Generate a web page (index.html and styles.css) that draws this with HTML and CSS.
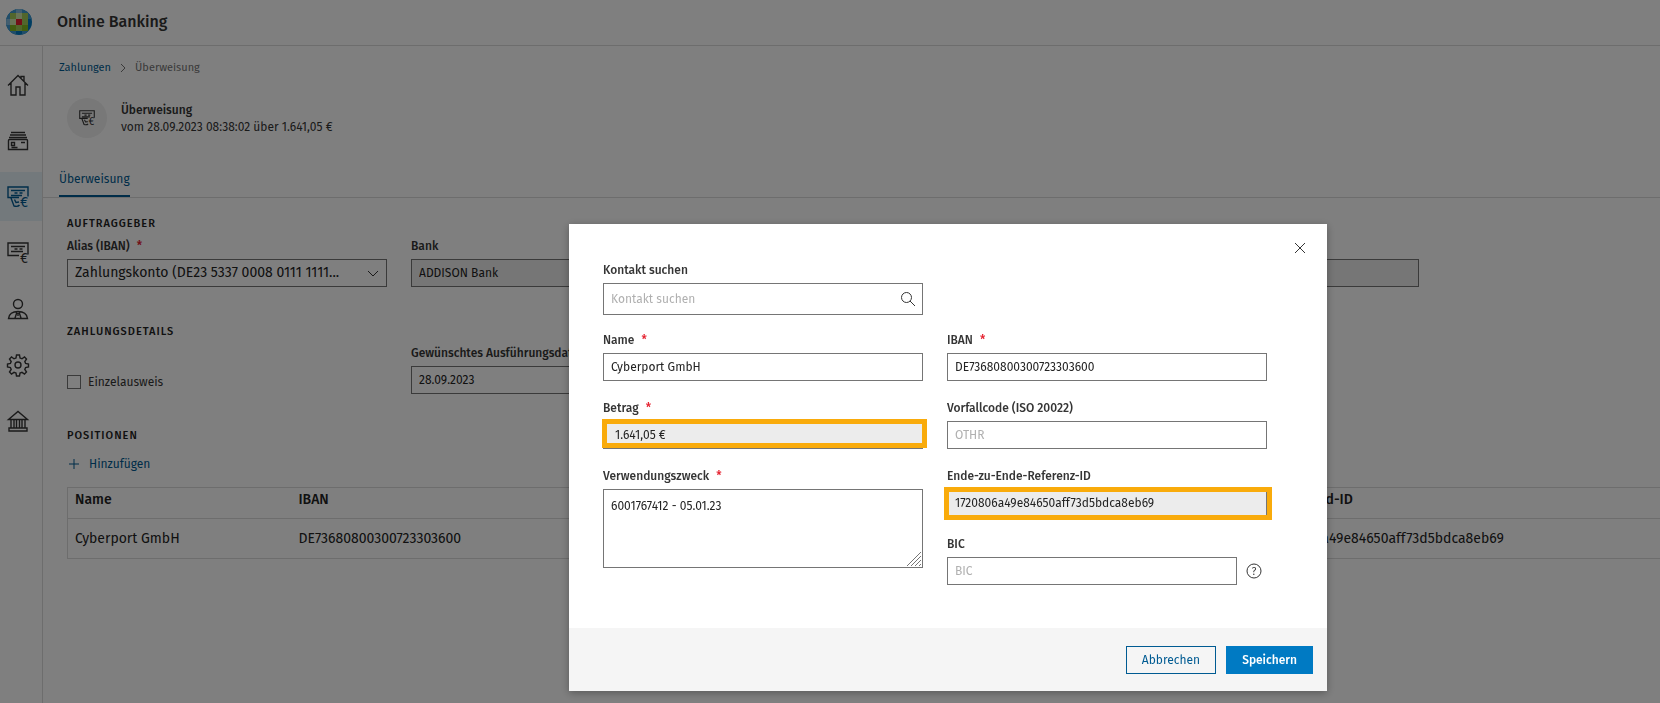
FILE: index.html
```html
<!DOCTYPE html>
<html lang="de">
<head>
    <meta charset="UTF-8">
    <meta name="viewport" content="width=device-width, initial-scale=1.0">
    <title>Online Banking</title>
    <link rel="stylesheet" href="styles.css">
</head>
<body>

    <header class="topbar">
        <svg class="logo" viewBox="0 0 26 26" aria-hidden="true">
            <clipPath id="globe"><circle cx="13" cy="13" r="13"/></clipPath>
            <g clip-path="url(#globe)">
                <rect width="26" height="26" fill="#007ac3"/>
                <path fill="#409bd2" d="M4 0h6v4H4zM16 0h6v4h-6zM4 22h6v4H4zM16 22h6v4h-6zM0 4h4v6H0zM0 16h4v6H0zM22 4h4v6h-4z"/>
                <path fill="#85bce0" d="M10 0h6v4h-6zM0 10h4v6H0z"/>
                <rect x="4" y="4" width="18" height="18" fill="#85bc20"/>
                <path fill="#a4cd58" d="M4 4h6v6H4zM16 4h6v6h-6zM16 10h6v6h-6zM10 16h6v6h-6z"/>
                <path fill="#d3e8af" d="M10 4h6v6h-6zM4 10h6v6H4z"/>
                <rect x="10" y="10" width="6" height="6" fill="#e5202e"/>
            </g>
        </svg>
        <span class="app-name">Online Banking</span>
    </header>

    <div class="shell">
        <nav class="sidebar">
            <a href="#" class="nav-item" aria-label="Start">
                <svg class="icon" viewBox="0 0 22 22"><path d="M1 11.5 11 1.500l10 10M4 9v12h5v-8h4v8h5V9M14 4V2.500h3V7"/></svg>
            </a>
            <a href="#" class="nav-item" aria-label="Konten">
                <svg class="icon" viewBox="0 0 22 22"><path d="M4 2.500h14M3 5h16M2 7.500h18M1.500 10.500q0-1 1-1h17q1 0 1 1v9h-19zM4.500 12.500h3v3h-3zM4.500 17.500h6M14 12.500h4"/></svg>
            </a>
            <a href="#" class="nav-item active" aria-label="Zahlungen">
                <svg class="icon" viewBox="0 0 22 22"><path d="M12 11.500H1V1h20v9.500M4 4.500h14M7.500 7h3M12.500 7h3M4 9.500h11M4 12l3 8q4 1 5.500-1M7.500 13.500l1.500 3 3-.5"/><text x="13" y="21" font-size="14">€</text></svg>
            </a>
            <a href="#" class="nav-item" aria-label="Lastschriften">
                <svg class="icon" viewBox="0 0 22 22"><path d="M12 13.500H1V1h20v11.500M4 4.500h14M7.500 7h3M12.500 7h3M4 9.500h12"/><text x="13" y="21" font-size="14">€</text></svg>
            </a>
            <a href="#" class="nav-item" aria-label="Kontakte">
                <svg class="icon" viewBox="0 0 22 22"><circle cx="11" cy="6" r="4.500"/><path d="M1.500 20.500h19q-1-7-9.500-7t-9.500 7zM10 14l-2 6M12 14l2 6M11 15v3"/></svg>
            </a>
            <a href="#" class="nav-item" aria-label="Einstellungen">
                <svg class="icon" viewBox="0 0 22 22"><circle cx="11" cy="11" r="3"/><path d="M9.500 1h3l.5 3 2 .800 2.500-1.800 2 2L17.800 7.500l.8 2 2.900.5v3l-2.900.5-.8 2 1.700 2.500-2 2-2.500-1.700-2 .8-.5 2.900h-3l-.5-2.900-2-.8-2.500 1.700-2-2 1.700-2.500-.8-2-2.900-.5v-3l2.900-.5.8-2-1.700-2.500 2-2L7 4.800 9 4z"/></svg>
            </a>
            <a href="#" class="nav-item" aria-label="Banken">
                <svg class="icon" viewBox="0 0 22 22"><path d="M1.500 9.500 11 1.500l9.500 8zM4 10v8M7 10v8M9.500 10v8M12.500 10v8M15 10v8M18 10v8M2 18h18v3H2z"/></svg>
            </a>
        </nav>

        <main class="content">
            <nav class="breadcrumb">
                <a href="#">Zahlungen</a>
                <svg class="crumb-arrow" viewBox="0 0 6 10"><path d="M1 1l4 4-4 4"/></svg>
                <span>Überweisung</span>
            </nav>

            <div class="page-head">
                <div class="head-icon">
                    <svg viewBox="0 0 22 22"><path d="M12 11.500H1V1h20v9.500M4 4.500h14M7.500 7h3M12.500 7h3M4 9.500h11M4 12l3 8q4 1 5.500-1M7.500 13.500l1.500 3 3-.5"/><text x="13" y="21" font-size="14">€</text></svg>
                </div>
                <div>
                    <h1>Überweisung</h1>
                    <p>vom 28.09.2023 08:38:02 über 1.641,05 €</p>
                </div>
            </div>

            <div class="tabs">
                <a href="#" class="tab">Überweisung</a>
            </div>

            <section class="block">
                <h2>Auftraggeber</h2>
                <div class="columns">
                    <div class="field">
                        <label for="alias">Alias (IBAN) <span class="required">*</span></label>
                        <div class="select-wrap">
                            <select id="alias">
                                <option>Zahlungskonto (DE23 5337 0008 0111 1111...</option>
                            </select>
                            <svg class="chevron" viewBox="0 0 12 8"><path d="M1 1l5 5 5-5"/></svg>
                        </div>
                    </div>
                    <div class="field">
                        <label for="bank">Bank</label>
                        <input type="text" id="bank" value="ADDISON Bank" readonly>
                    </div>
                    <div class="field last-column">
                        <input type="text" aria-label="BIC der Bank" readonly>
                    </div>
                </div>
            </section>

            <section class="block">
                <h2>Zahlungsdetails</h2>
                <div class="columns">
                    <div class="check">
                        <input type="checkbox" id="single">
                        <label for="single">Einzelausweis</label>
                    </div>
                    <div class="field">
                        <label for="date">Gewünschtes Ausführungsdatum</label>
                        <input type="text" id="date" value="28.09.2023">
                    </div>
                </div>
            </section>

            <section class="block">
                <h2>Positionen</h2>
                <button type="button" class="add">
                    <svg viewBox="0 0 10 10"><path d="M5 0v10M0 5h10"/></svg>
                    Hinzufügen
                </button>
                <table class="positions">
                    <thead>
                        <tr><th class="col-name">Name</th><th class="col-iban">IBAN</th><th>EndToEnd-ID</th></tr>
                    </thead>
                    <tbody>
                        <tr><td>Cyberport GmbH</td><td>DE73680800300723303600</td><td>1720806a49e84650aff73d5bdca8eb69</td></tr>
                    </tbody>
                </table>
            </section>
        </main>
    </div>

    <div class="overlay">
        <form class="modal" role="dialog" aria-label="Position bearbeiten">
            <button type="button" class="close" aria-label="Schließen">
                <svg viewBox="0 0 12 12"><path d="M1 1l10 10M11 1L1 11"/></svg>
            </button>

            <div class="modal-body">
                <div class="modal-column search-row">
                    <div class="field">
                        <label for="search">Kontakt suchen</label>
                        <div class="search-wrap">
                            <input type="text" id="search" placeholder="Kontakt suchen">
                            <svg class="search-icon" viewBox="0 0 16 16"><circle cx="6.500" cy="6.500" r="5"/><path d="M10 10l5 5"/></svg>
                        </div>
                    </div>
                </div>

                <div class="modal-column">
                    <div class="field">
                        <label for="name">Name <span class="required">*</span></label>
                        <input type="text" id="name" value="Cyberport GmbH">
                    </div>
                    <div class="field">
                        <label for="amount">Betrag <span class="required">*</span></label>
                        <div class="marked mark-amount">
                            <input type="text" id="amount" value="1.641,05 €" readonly>
                        </div>
                    </div>
                    <div class="field">
                        <label for="purpose">Verwendungszweck <span class="required">*</span></label>
                        <div class="textarea-wrap">
                            <textarea id="purpose">6001767412 - 05.01.23</textarea>
                            <svg class="grip" viewBox="0 0 15 15"><path d="M1 15L15 1M5 15L15 5M9 15l6-6M13 15l2-2"/></svg>
                        </div>
                    </div>
                </div>

                <div class="modal-column">
                    <div class="field">
                        <label for="iban">IBAN <span class="required">*</span></label>
                        <input type="text" id="iban" value="DE73680800300723303600">
                    </div>
                    <div class="field">
                        <label for="code">Vorfallcode (ISO 20022)</label>
                        <input type="text" id="code" placeholder="OTHR">
                    </div>
                    <div class="field">
                        <label for="reference">Ende-zu-Ende-Referenz-ID</label>
                        <div class="marked mark-reference">
                            <input type="text" id="reference" value="1720806a49e84650aff73d5bdca8eb69" readonly>
                        </div>
                    </div>
                    <div class="field">
                        <label for="bic">BIC</label>
                        <div class="bic-row">
                            <input type="text" id="bic" placeholder="BIC">
                            <svg class="help" viewBox="0 0 16 16"><circle cx="8" cy="8" r="7"/><text x="8" y="12" text-anchor="middle" font-size="10">?</text></svg>
                        </div>
                    </div>
                </div>
            </div>

            <div class="modal-footer">
                <button type="button" class="btn">Abbrechen</button>
                <button type="submit" class="btn btn-primary">Speichern</button>
            </div>
        </form>
    </div>

</body>
</html>
```
FILE: styles.css
```css
* {
    box-sizing: border-box;
}

body {
    margin: 0;
    min-height: 100vh;
    display: flex;
    flex-direction: column;
    overflow: hidden;
    font-family: "Fira Sans", Roboto, sans-serif;
    font-size: 12px;
    line-height: 16px;
    color: #353535;
    background: #fff;
}

h1, h2, p {
    margin: 0;
}

a {
    color: #005b92;
    text-decoration: none;
}

svg {
    display: block;
    overflow: visible;
    fill: none;
    stroke: currentColor;
}

svg text {
    fill: currentColor;
    stroke: none;
}

input, select, textarea, button {
    font: inherit;
}

/* header */
.topbar {
    display: flex;
    align-items: center;
    gap: 25px;
    height: 46px;
    padding: 0 6px 2px;
    border-bottom: 1px solid #dadada;
}

.logo {
    width: 26px;
    height: 26px;
    stroke: none;
}

.app-name {
    font-size: 16px;
    font-weight: 500;
}

/* sidebar */
.shell {
    display: flex;
    flex: 1;
}

.sidebar {
    display: flex;
    flex-direction: column;
    gap: 7px;
    flex: 0 0 43px;
    padding-top: 14px;
    border-right: 1px solid #dadada;
}

.nav-item {
    display: flex;
    align-items: center;
    height: 49px;
    padding-left: 7px;
    color: #353535;
}

.nav-item.active {
    background: #e6f2f9;
    color: #005b92;
}

.icon {
    width: 22px;
    height: 22px;
    stroke-width: 1.4;
}

/* page */
.content {
    flex: 1;
    min-width: 0;
}

.breadcrumb {
    display: flex;
    align-items: center;
    gap: 9px;
    padding: 14px 16px 0;
    font-size: 11px;
    color: #757575;
}

.crumb-arrow {
    width: 6px;
    height: 10px;
}

.page-head {
    display: flex;
    align-items: center;
    gap: 14px;
    padding: 22px 24px 0;
}

.page-head h1 {
    font-size: 12px;
    font-weight: 500;
    line-height: 17px;
}

.head-icon {
    display: flex;
    align-items: center;
    justify-content: center;
    width: 40px;
    height: 40px;
    border-radius: 50%;
    background: #f0f0f0;
}

.head-icon svg {
    width: 16px;
    height: 16px;
    stroke-width: 1.5;
}

.tabs {
    display: flex;
    margin-top: 33px;
    padding-left: 16px;
    border-bottom: 1px solid #dadada;
}

.tab {
    padding-bottom: 8px;
    border-bottom: 2px solid #005b92;
}

.block {
    padding-left: 24px;
}

.block h2 {
    font-size: 11px;
    font-weight: 500;
    letter-spacing: 1px;
    text-transform: uppercase;
    color: #232323;
}

.tabs + .block {
    margin-top: 18px;
}

.block + .block {
    margin-top: 37px;
}

.block:last-child {
    margin-top: 34px;
}

.columns {
    display: grid;
    grid-template-columns: repeat(4, minmax(0, 320px));
    align-items: end;
    gap: 24px;
    margin-top: 6px;
}

.last-column {
    grid-column: 4;
}

.block + .block .columns {
    margin-top: 5px;
}

/* fields */
.field label {
    display: block;
    margin-bottom: 5px;
    font-weight: 500;
}

.required {
    margin-left: 4px;
    color: #e5202e;
}

input[type="text"], select, textarea {
    display: block;
    width: 100%;
    height: 28px;
    margin: 0;
    padding: 0 7px;
    border: 1px solid #757575;
    border-radius: 0;
    background: #fff;
    color: #232323;
}

input::placeholder {
    color: #b0b0b0;
}

input[readonly] {
    background: #ececec;
}

.select-wrap, .search-wrap, .textarea-wrap, .marked {
    position: relative;
}

select {
    appearance: none;
    font-size: 14px;
}

.chevron {
    position: absolute;
    top: 11px;
    right: 8px;
    width: 12px;
    height: 8px;
}

.check {
    display: flex;
    align-items: center;
    gap: 7px;
    padding-bottom: 4px;
}

.check input {
    appearance: none;
    width: 14px;
    height: 14px;
    margin: 0;
    border: 1px solid #757575;
}

.add {
    display: flex;
    align-items: center;
    gap: 10px;
    margin: 12px 0 15px;
    padding: 0 2px;
    border: 0;
    background: none;
    color: #005b92;
}

.add svg {
    width: 10px;
    height: 10px;
}

.positions {
    width: 100%;
    table-layout: fixed;
    border-collapse: collapse;
    border: 1px solid #dadada;
    border-right: 0;
    font-size: 14px;
    color: #232323;
}

.positions th, .positions td {
    height: 40px;
    padding: 0 7px;
    text-align: left;
    white-space: nowrap;
    border-bottom: 1px solid #dadada;
}

.positions th {
    height: 31px;
    padding-bottom: 6px;
    font-weight: 500;
}

.col-name {
    width: 224px;
}

.col-iban {
    width: 973px;
}

/* dialog */
.overlay {
    position: fixed;
    inset: 0;
    display: flex;
    align-items: flex-start;
    justify-content: center;
    padding: 224px 0 0 236px;
    background: rgba(0, 0, 0, 0.5);
}

.modal {
    position: relative;
    background: #fff;
    box-shadow: 0 2px 8px rgba(0, 0, 0, 0.3);
}

.close {
    position: absolute;
    top: 18px;
    right: 21px;
    padding: 0;
    border: 0;
    background: none;
    color: #353535;
}

.close svg {
    width: 12px;
    height: 12px;
}

.modal-body {
    display: grid;
    grid-template-columns: repeat(2, 320px);
    column-gap: 24px;
    padding: 38px 60px 43px 34px;
}

.search-row {
    grid-column: 1 / 3;
    width: 320px;
    margin-bottom: 17px;
}

.search-wrap input[type="text"] {
    height: 32px;
}

.search-icon {
    position: absolute;
    top: 8px;
    right: 7px;
    width: 16px;
    height: 16px;
}

.modal-column {
    display: flex;
    flex-direction: column;
    gap: 19px;
}

.textarea-wrap textarea {
    height: 79px;
    padding-top: 8px;
    resize: none;
}

.grip {
    position: absolute;
    right: 2px;
    bottom: 2px;
    width: 15px;
    height: 15px;
    color: #757575;
}

/* orange marker frames lie over the input */
.marked::after {
    content: "";
    position: absolute;
    border: 5px solid #f9ab0b;
}

.mark-amount::after {
    inset: -2px -4px 1px -1px;
}

.mark-amount input[type="text"] {
    padding-left: 11px;
}

.mark-reference::after {
    inset: -2px -5px -3px -3px;
}

.bic-row {
    display: flex;
    align-items: center;
    gap: 9px;
    padding-right: 5px;
}

.help {
    flex: 0 0 16px;
    height: 16px;
}

.modal-footer {
    display: flex;
    justify-content: flex-end;
    gap: 10px;
    padding: 18px 14px 17px;
    background: #f5f5f5;
}

.btn {
    height: 28px;
    padding: 0 15px;
    border: 1px solid #005b92;
    background: none;
    color: #005b92;
}

.btn-primary {
    border-color: #007ac3;
    background: #007ac3;
    color: #fff;
    font-weight: 500;
}
```
